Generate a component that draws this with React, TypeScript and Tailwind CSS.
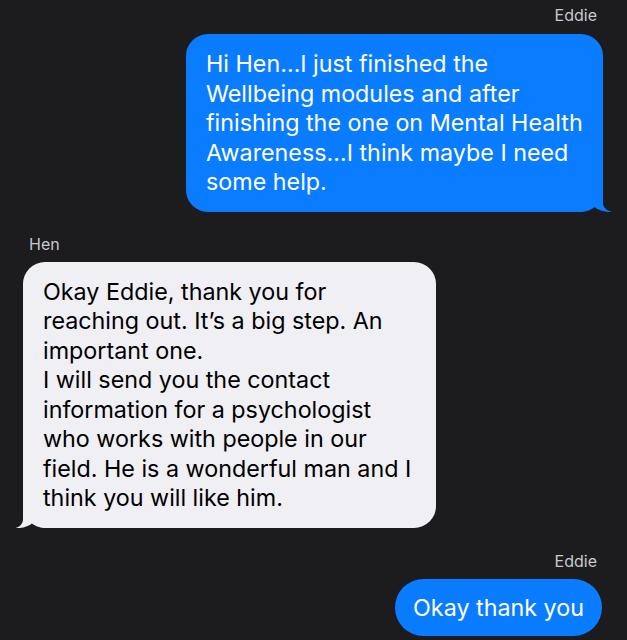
import React from "react";

const blueLines = [
  "Hi Hen…I just finished the",
  "Wellbeing modules and after",
  "finishing the one on Mental Health",
  "Awareness…I think maybe I need",
  "some help.",
];

const grayLines = [
  "Okay Eddie, thank you for",
  "reaching out. It’s a big step. An",
  "important one.",
  "I will send you the contact",
  "information for a psychologist",
  "who works with people in our",
  "field. He is a wonderful man and I",
  "think you will like him.",
];

export default function App() {
  return (
    <div className="w-[627px] h-[640px] overflow-hidden bg-[#1c1c1e] flex flex-col font-['Inter',sans-serif] antialiased">
      <div className="mt-[5px] pr-[30px] text-right text-[16px] leading-[20px] text-[#c8c8cc]">Eddie</div>
      <div className="relative self-end mr-[24px] mt-[9px] w-[417px] rounded-[22px] bg-[#0a7cff] px-[20px] py-[15px] text-white text-[23.3px] leading-[29.5px]">
        <svg className="absolute right-[-10px] bottom-0" width="36" height="30" viewBox="0 0 36 30">
          <path d="M0 30 C8 30 12 27 15 23 C20 28 28 30.5 35.5 30 C30 29 26 25.5 26 21 V0 H0 Z" fill="#0a7cff" />
        </svg>
        {blueLines.map((l, i) => (
          <div key={i} className="relative whitespace-nowrap">{l}</div>
        ))}
      </div>

      <div className="mt-[22px] pl-[29px] text-[16px] leading-[20px] text-[#c8c8cc]">Hen</div>
      <div className="relative self-start ml-[23px] mt-[8px] w-[413px] rounded-[22px] bg-[#efeff4] px-[20px] py-[15px] text-black text-[23.3px] leading-[29.5px]">
        <svg className="absolute left-[-8px] bottom-0" width="34" height="30" viewBox="0 0 34 30">
          <path d="M34 30 C26 30 21 28 18 24.5 C14 28.5 7 30.5 0.5 30 C5 29 8 25.5 8 21 V0 H34 Z" fill="#efeff4" />
        </svg>
        {grayLines.map((l, i) => (
          <div key={i} className="relative whitespace-nowrap">{l}</div>
        ))}
      </div>

      <div className="mt-[23px] pr-[30px] text-right text-[16px] leading-[20px] text-[#c8c8cc]">Eddie</div>
      <div className="self-end mr-[25px] mt-[8px] rounded-full bg-[#0a7cff] px-[18px] py-[14px] text-white text-[23.3px] leading-[29.5px] whitespace-nowrap">
        Okay thank you
      </div>
    </div>
  );
}
